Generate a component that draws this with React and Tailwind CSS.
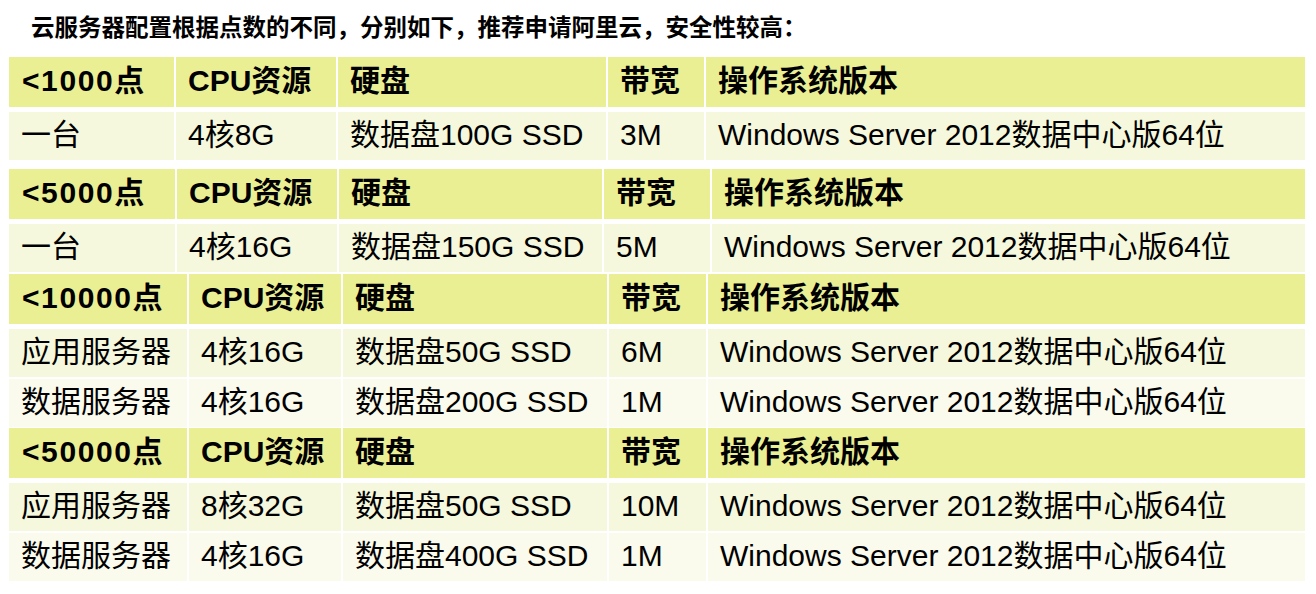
import React from 'react';

const tables = [
  {
    label: '<1000点',
    cols: 'grid-cols-[165px_160px_268px_96px_599px]',
    gapAfter: 'mb-[10px]',
    rows: [['一台', '4核8G', '数据盘100G SSD', '3M', 'Windows Server 2012数据中心版64位']],
  },
  {
    label: '<5000点',
    cols: 'grid-cols-[166px_160px_263px_106px_593px]',
    gapAfter: 'mb-[3px]',
    rows: [['一台', '4核16G', '数据盘150G SSD', '5M', 'Windows Server 2012数据中心版64位']],
  },
  {
    label: '<10000点',
    cols: 'grid-cols-[178px_152px_264px_97px_597px]',
    gapAfter: 'mb-[2px]',
    rows: [
      ['应用服务器', '4核16G', '数据盘50G SSD', '6M', 'Windows Server 2012数据中心版64位'],
      ['数据服务器', '4核16G', '数据盘200G SSD', '1M', 'Windows Server 2012数据中心版64位'],
    ],
  },
  {
    label: '<50000点',
    cols: 'grid-cols-[178px_152px_264px_97px_597px]',
    gapAfter: '',
    rows: [
      ['应用服务器', '8核32G', '数据盘50G SSD', '10M', 'Windows Server 2012数据中心版64位'],
      ['数据服务器', '4核16G', '数据盘400G SSD', '1M', 'Windows Server 2012数据中心版64位'],
    ],
  },
];

const font = "font-['Liberation_Sans','Noto_Sans_CJK_SC',sans-serif]";

const SpecTable = ({ table }) => {
  const header = [table.label, 'CPU资源', '硬盘', '带宽', '操作系统版本'];
  return (
    <div className={table.gapAfter}>
      {/* Header row */}
      <div className={`grid ${table.cols} gap-x-[2px] h-[50px] mb-[5px]`}>
        {header.map((h, i) => (
          <div
            key={i}
            className={`bg-[#ebef94] flex items-center pb-[3px] font-bold text-[30px] whitespace-nowrap ${i === 0 ? 'pl-[13px] tracking-[1.6px]' : 'pl-3'}`}
          >
            {h}
          </div>
        ))}
      </div>
      {table.rows.map((row, r) => (
        <div
          key={r}
          className={`grid ${table.cols} gap-x-[2px] h-[47px] ${r < table.rows.length - 1 ? 'mb-[3px]' : ''}`}
        >
          {row.map((cell, i) => (
            <div
              key={i}
              className={`flex items-center pb-[3px] text-[30px] whitespace-nowrap ${r % 2 === 0 ? 'bg-[#f5f8dd]' : 'bg-[#fafbed]'} ${i === 0 ? 'pl-[12px]' : 'pl-3'}`}
            >
              {cell}
            </div>
          ))}
        </div>
      ))}
    </div>
  );
};

export default function App() {
  return (
    <div className={`w-[1316px] h-[594px] bg-white text-black overflow-hidden ${font}`}>
      <div className="h-[57px] pl-[31px] pt-[13px] text-[23.5px] font-bold leading-[30px] whitespace-nowrap">
        云服务器配置根据点数的不同，分别如下，推荐申请阿里云，安全性较高：
      </div>
      <div className="pl-[9px]">
        {tables.map((t, i) => (
          <SpecTable key={i} table={t} />
        ))}
      </div>
    </div>
  );
}
